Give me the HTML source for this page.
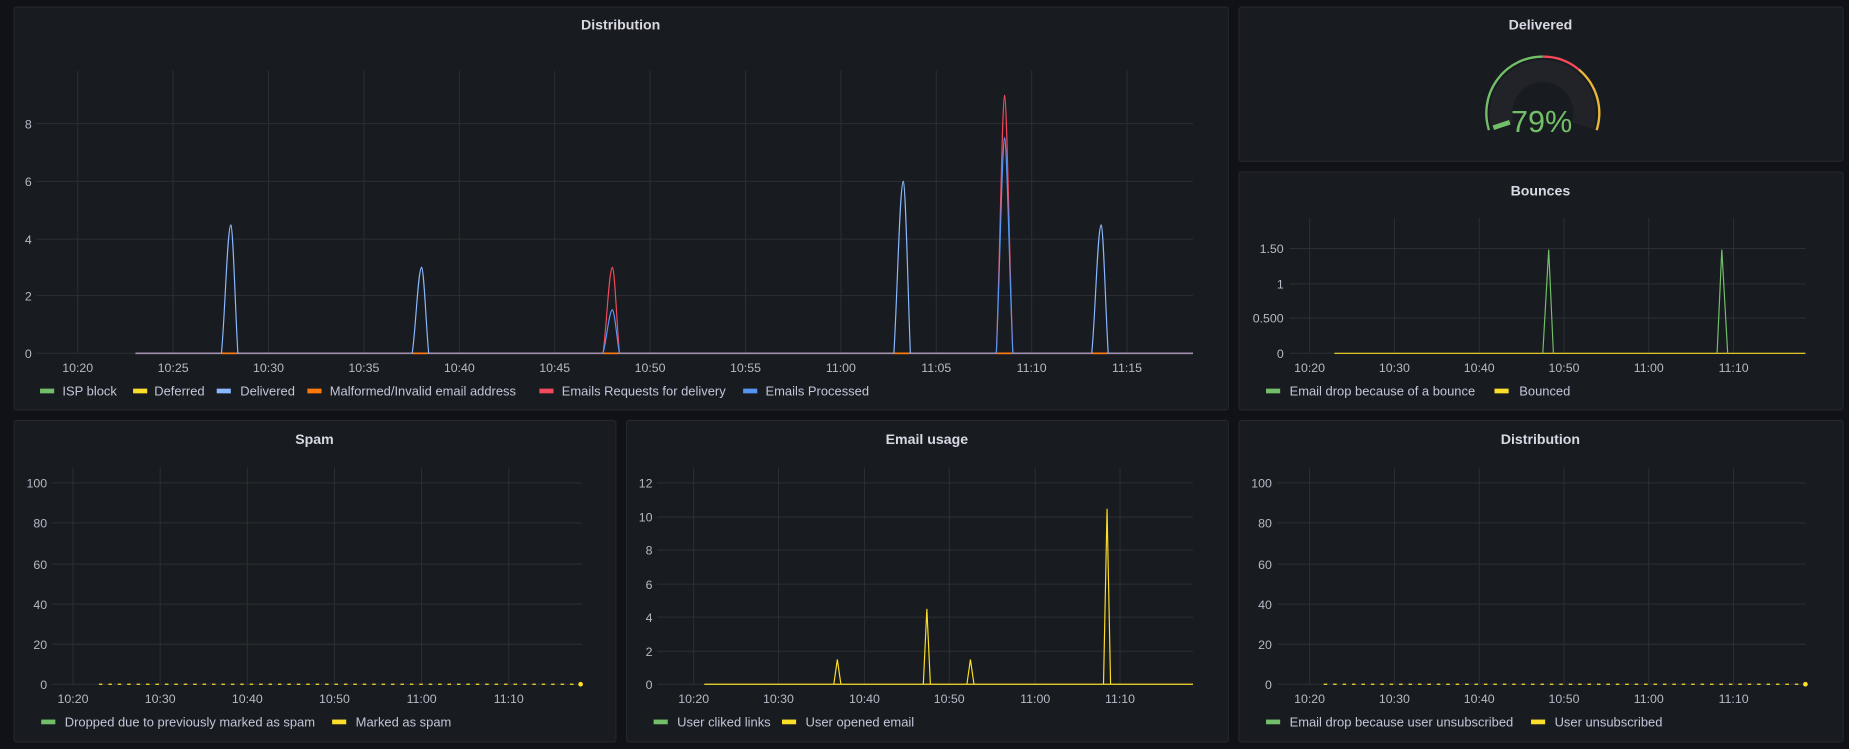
<!DOCTYPE html>
<html><head><meta charset="utf-8"><style>
html,body{margin:0;padding:0;background:#111217;width:1849px;height:749px;overflow:hidden}
svg{display:block}
text{font-family:"Liberation Sans",sans-serif;fill:#ccccdc}
.t{font-size:12px;font-weight:bold;text-anchor:middle;fill:#d8d9e4}
.y{font-size:10.5px;text-anchor:end;fill:#b8b9c6}
.x{font-size:10.5px;text-anchor:middle;fill:#b8b9c6}
.l{font-size:11px;fill:#c3c6d9}
.g{stroke:#2c2f35;stroke-width:0.85;fill:none}
.p{fill:#181b1f;stroke:#24272d;stroke-width:0.9}
</style></head><body>
<svg width="1849" height="749" viewBox="0 0 1570 636" preserveAspectRatio="none">
<rect width="1570" height="636" fill="#111217"/>
<rect class="p" x="12" y="6" width="1031" height="342" rx="2"/>
<rect class="p" x="1052" y="6" width="513" height="131" rx="2"/>
<rect class="p" x="1052" y="146" width="513" height="202" rx="2"/>
<rect class="p" x="12" y="357" width="511" height="273" rx="2"/>
<rect class="p" x="532" y="357" width="511" height="273" rx="2"/>
<rect class="p" x="1052" y="357" width="513" height="273" rx="2"/>

<text class="t" x="527" y="25">Distribution</text>
<g class="g">
<path d="M31 300H1013M31 251H1013M31 203H1013M31 154H1013M31 105H1013"/>
<path d="M66 60V300M147 60V300M228 60V300M309 60V300M390 60V300M471 60V300M552 60V300M633 60V300M714 60V300M795 60V300M876 60V300M957 60V300"/>
</g>
<g>
<text class="y" x="27" y="304">0</text><text class="y" x="27" y="255">2</text><text class="y" x="27" y="207">4</text><text class="y" x="27" y="158">6</text><text class="y" x="27" y="109">8</text>
</g>
<g>
<text class="x" x="66" y="316">10:20</text><text class="x" x="147" y="316">10:25</text><text class="x" x="228" y="316">10:30</text><text class="x" x="309" y="316">10:35</text><text class="x" x="390" y="316">10:40</text><text class="x" x="471" y="316">10:45</text><text class="x" x="552" y="316">10:50</text><text class="x" x="633" y="316">10:55</text><text class="x" x="714" y="316">11:00</text><text class="x" x="795" y="316">11:05</text><text class="x" x="876" y="316">11:10</text><text class="x" x="957" y="316">11:15</text>
</g>
<path d="M115 300H1013" stroke="#a38fae" stroke-width="1.3"/>
<g stroke="#ff780a" stroke-width="1.3"><path d="M188 300H201M350 300H363M512 300H525M759 300H772M846 300H859M927 300H940"/></g>
<g fill="none" stroke-width="1" stroke-linejoin="round">
<path d="M188 300C191 270 193 192 196 191C198 192 200 270 202 300" stroke="#8ab8ff"/>
<path d="M350 300C353 280 355 228 358 227C360 228 362 280 364 300" stroke="#8ab8ff"/>
<path d="M512 300C515 280 517 228 520 227C522 228 524 280 526 300" stroke="#f2495c"/>
<path d="M512 300C515 290 517 264 520 263C522 264 524 290 526 300" stroke="#5794f2"/>
<path d="M759 300C762 250 764 155 767 154C769 155 771 250 773 300" stroke="#8ab8ff"/>
<path d="M846 300C849 220 851 82 853 81C855 82 857 220 860 300" stroke="#f2495c"/>
<path d="M846 300C849 230 851 118 853 117C855 118 857 230 860 300" stroke="#5794f2"/>
<path d="M927 300C930 270 932 192 935 191C937 192 939 270 941 300" stroke="#8ab8ff"/>
</g>
<g>
<rect x="34" y="330" width="12" height="4" fill="#73bf69"/><text class="l" x="53" y="336">ISP block</text>
<rect x="113" y="330" width="12" height="4" fill="#fade2a"/><text class="l" x="131" y="336">Deferred</text>
<rect x="184" y="330" width="12" height="4" fill="#8ab8ff"/><text class="l" x="204" y="336">Delivered</text>
<rect x="261" y="330" width="12" height="4" fill="#ff780a"/><text class="l" x="280" y="336">Malformed/Invalid email address</text>
<rect x="458" y="330" width="12" height="4" fill="#f2495c"/><text class="l" x="477" y="336">Emails Requests for delivery</text>
<rect x="631" y="330" width="12" height="4" fill="#5794f2"/><text class="l" x="650" y="336">Emails Processed</text>
</g>

<text class="t" x="1308" y="25">Delivered</text>
<path d="M1276.2 106.7A35.5 35.5 0 1 1 1343.8 106.7" fill="none" stroke="#212328" stroke-width="19"/>
<path d="M1264.3 110.5A48 48 0 0 1 1310 48" fill="none" stroke="#73bf69" stroke-width="2"/>
<path d="M1310 48A48 48 0 0 1 1340.8 59.2" fill="none" stroke="#f2495c" stroke-width="2"/>
<path d="M1340.8 59.2A48 48 0 0 1 1355.7 110.5" fill="none" stroke="#eab839" stroke-width="2"/>
<path d="M1268 108.5L1282 103.8" stroke="#73bf69" stroke-width="4"/>
<text x="1309" y="112" style="font-size:26px;text-anchor:middle;fill:#73bf69">79%</text>

<text class="t" x="1308" y="166">Bounces</text>
<g class="g">
<path d="M1095 300H1533M1095 270H1533M1095 241H1533M1095 211H1533"/>
<path d="M1112 185V300M1184 185V300M1256 185V300M1328 185V300M1400 185V300M1472 185V300"/>
</g>
<text class="y" x="1090" y="215">1.50</text><text class="y" x="1090" y="245">1</text><text class="y" x="1090" y="274">0.500</text><text class="y" x="1090" y="304">0</text>
<g><text class="x" x="1112" y="316">10:20</text><text class="x" x="1184" y="316">10:30</text><text class="x" x="1256" y="316">10:40</text><text class="x" x="1328" y="316">10:50</text><text class="x" x="1400" y="316">11:00</text><text class="x" x="1472" y="316">11:10</text></g>
<path d="M1133 300H1533" stroke="#fade2a" stroke-width="1"/>
<g fill="none" stroke="#73bf69" stroke-width="1"><path d="M1310 300L1315 212L1319 300M1458 300L1462 212L1467 300"/></g>
<rect x="1075" y="330" width="12" height="4" fill="#73bf69"/><text class="l" x="1095" y="336">Email drop because of a bounce</text>
<rect x="1269" y="330" width="12" height="4" fill="#fade2a"/><text class="l" x="1290" y="336">Bounced</text>

<text class="t" x="267" y="377">Spam</text>
<g class="g">
<path d="M44 581H494M44 547H494M44 513H494M44 479H494M44 444H494M44 410H494"/>
<path d="M62 397V581M136 397V581M210 397V581M284 397V581M358 397V581M432 397V581"/>
</g>
<text class="y" x="40" y="585">0</text><text class="y" x="40" y="551">20</text><text class="y" x="40" y="517">40</text><text class="y" x="40" y="483">60</text><text class="y" x="40" y="448">80</text><text class="y" x="40" y="414">100</text>
<g><text class="x" x="62" y="597">10:20</text><text class="x" x="136" y="597">10:30</text><text class="x" x="210" y="597">10:40</text><text class="x" x="284" y="597">10:50</text><text class="x" x="358" y="597">11:00</text><text class="x" x="432" y="597">11:10</text></g>
<path d="M84 581H493" stroke="#fade2a" stroke-width="1" stroke-dasharray="3 5"/>
<circle cx="493" cy="581" r="2" fill="#fade2a"/>
<rect x="35" y="611" width="12" height="4" fill="#73bf69"/><text class="l" x="55" y="617">Dropped due to previously marked as spam</text>
<rect x="282" y="611" width="12" height="4" fill="#fade2a"/><text class="l" x="302" y="617">Marked as spam</text>

<text class="t" x="787" y="377">Email usage</text>
<g class="g">
<path d="M558 581H1013M558 553H1013M558 524H1013M558 496H1013M558 467H1013M558 439H1013M558 410H1013"/>
<path d="M589 397V581M661 397V581M734 397V581M806 397V581M879 397V581M951 397V581"/>
</g>
<text class="y" x="554" y="585">0</text><text class="y" x="554" y="557">2</text><text class="y" x="554" y="528">4</text><text class="y" x="554" y="500">6</text><text class="y" x="554" y="471">8</text><text class="y" x="554" y="443">10</text><text class="y" x="554" y="414">12</text>
<g><text class="x" x="589" y="597">10:20</text><text class="x" x="661" y="597">10:30</text><text class="x" x="734" y="597">10:40</text><text class="x" x="806" y="597">10:50</text><text class="x" x="879" y="597">11:00</text><text class="x" x="951" y="597">11:10</text></g>
<path d="M598 581H1013" stroke="#fade2a" stroke-width="1"/>
<g fill="none" stroke="#fade2a" stroke-width="1"><path d="M708 581L711 560L714 581M784 581L787 517L790 581M821 581L824 560L827 581M937 581L940 432L943 581"/></g>
<rect x="555" y="611" width="12" height="4" fill="#73bf69"/><text class="l" x="575" y="617">User cliked links</text>
<rect x="664" y="611" width="12" height="4" fill="#fade2a"/><text class="l" x="684" y="617">User opened email</text>

<text class="t" x="1308" y="377">Distribution</text>
<g class="g">
<path d="M1085 581H1533M1085 547H1533M1085 513H1533M1085 479H1533M1085 444H1533M1085 410H1533"/>
<path d="M1112 397V581M1184 397V581M1256 397V581M1328 397V581M1400 397V581M1472 397V581"/>
</g>
<text class="y" x="1080" y="585">0</text><text class="y" x="1080" y="551">20</text><text class="y" x="1080" y="517">40</text><text class="y" x="1080" y="483">60</text><text class="y" x="1080" y="448">80</text><text class="y" x="1080" y="414">100</text>
<g><text class="x" x="1112" y="597">10:20</text><text class="x" x="1184" y="597">10:30</text><text class="x" x="1256" y="597">10:40</text><text class="x" x="1328" y="597">10:50</text><text class="x" x="1400" y="597">11:00</text><text class="x" x="1472" y="597">11:10</text></g>
<path d="M1124 581H1533" stroke="#fade2a" stroke-width="1" stroke-dasharray="3 5"/>
<circle cx="1533" cy="581" r="2" fill="#fade2a"/>
<rect x="1075" y="611" width="12" height="4" fill="#73bf69"/><text class="l" x="1095" y="617">Email drop because user unsubscribed</text>
<rect x="1300" y="611" width="12" height="4" fill="#fade2a"/><text class="l" x="1320" y="617">User unsubscribed</text>
</svg>
</body></html>
